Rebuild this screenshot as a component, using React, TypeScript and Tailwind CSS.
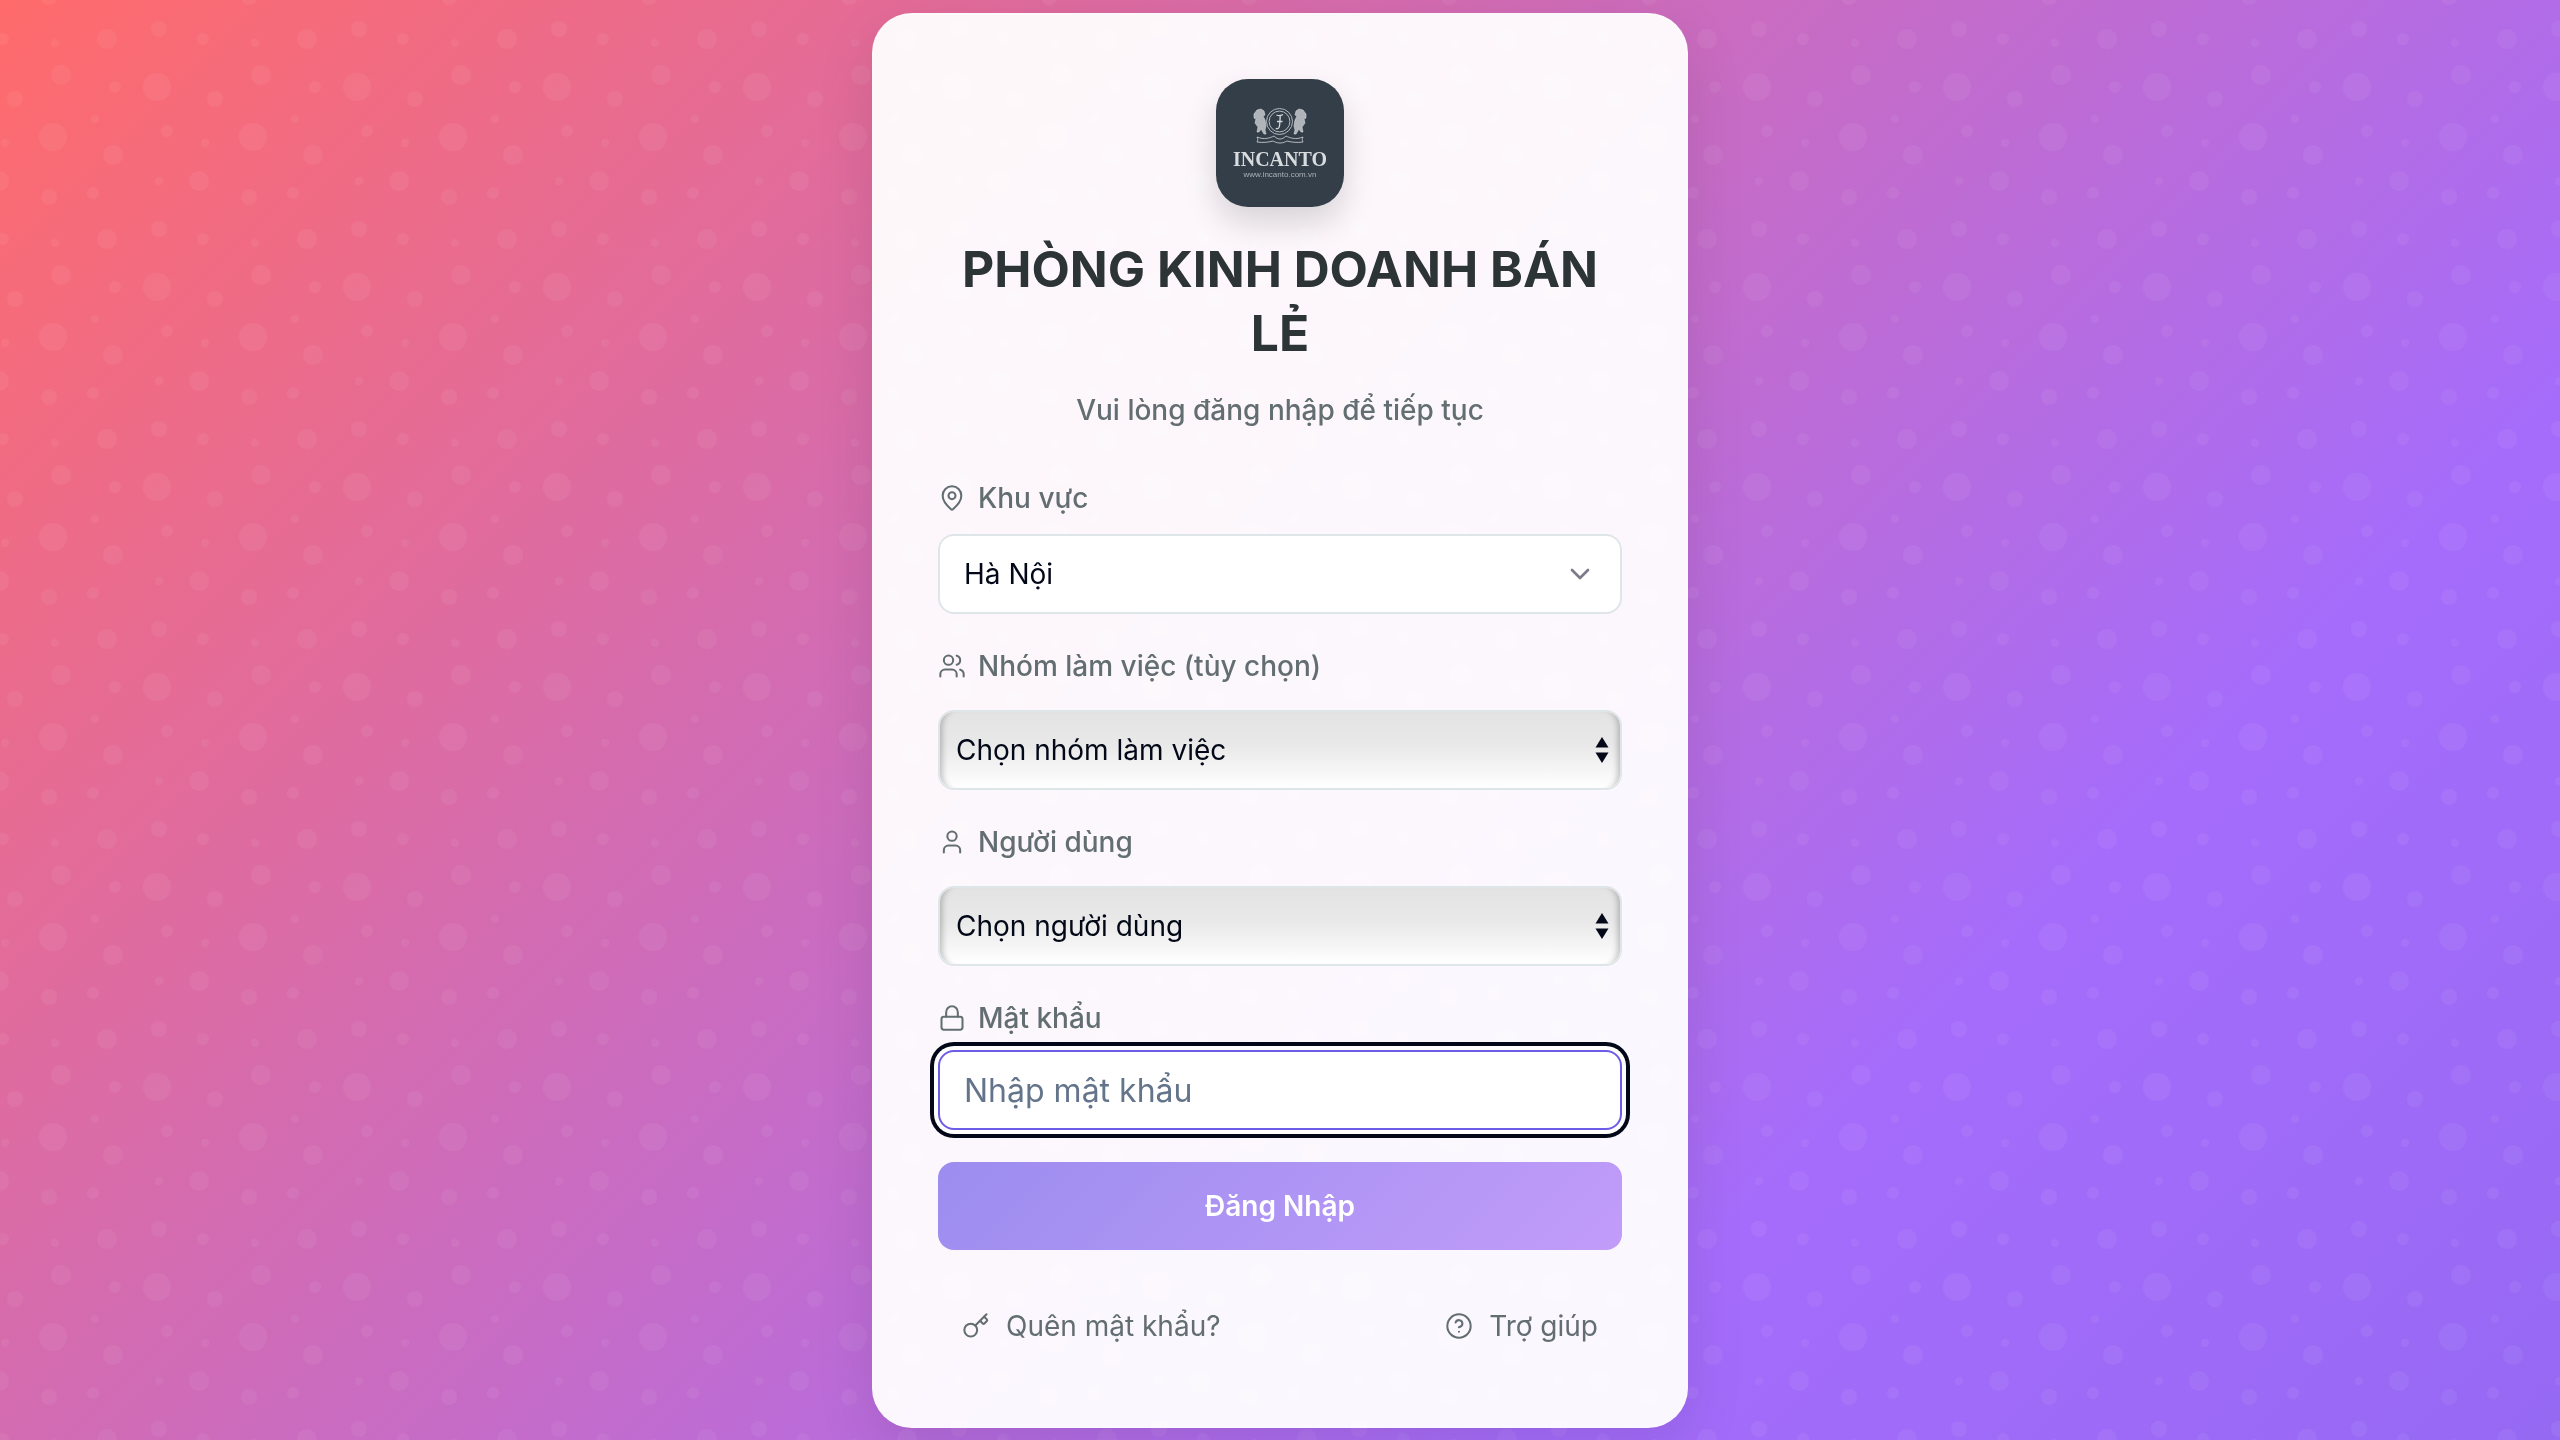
import { ChevronDown, CircleHelp, Key, Lock, MapPin, User, Users } from "lucide-react";
import type { ReactNode } from "react";

const dots: [number, number, number][] = [
  [61, 75, 10], [115, 87, 6], [157, 87, 14], [15, 99, 8], [95, 119, 4],
  [53, 137, 14], [167, 131, 6], [5, 143, 4], [113, 155, 10], [159, 181, 4],
  [199, 181, 10], [-1, 181, 10], [49, 197, 8], [49, -3, 8], [93, 193, 6], [93, -7, 6],
  [159, 29, 8], [107, 39, 10], [3, 39, 6], [203, 39, 6], [55, 43, 4],
];

function BackgroundDots() {
  return (
    <svg className="absolute inset-0 h-full w-full" aria-hidden="true">
      <defs>
        <pattern id="dots" width="200" height="200" patternUnits="userSpaceOnUse">
          {dots.map(([cx, cy, r]) => (
            <circle key={`${cx}-${cy}`} cx={cx} cy={cy} r={r} fill="#ffffff" fillOpacity="0.05" />
          ))}
        </pattern>
      </defs>
      <rect width="100%" height="100%" fill="url(#dots)" />
    </svg>
  );
}

function Crest() {
  return (
    <svg width="54" height="38" viewBox="0 0 54 38" fill="none" stroke="#d3d7da" strokeWidth="0.9" aria-hidden="true">
      <circle cx="26.5" cy="13.5" r="13" strokeWidth="0.8" />
      <circle cx="26.5" cy="13.5" r="10.4" strokeWidth="0.8" />
      <path d="M23.5 7c2 1 4 1 6.5-.5M27.5 7c-1 4 0 9-1.5 12.5-.8 1.5-2.5 1.6-3 .4M24 13.5h5.5" strokeWidth="1.3" />
      <path d="M1 6l3-4 4-1 3 2 1 4-2 1 2 4 1 6-1 4 1 4h-2l-3-5-2 3H4l1-5-3-4 1-4-2-1z" fill="#aeb4b9" strokeWidth="0.6" />
      <path d="M53 6l-3-4-4-1-3 2-1 4 2 1-2 4-1 6 1 4-1 4h2l3-5 2 3h2l-1-5 3-4-1-4 2-1z" fill="#aeb4b9" strokeWidth="0.6" />
      <path d="M4 29c7 3 13 1 17-1 2 2 4 3 6 3s4-1 6-3c4 2 10 4 17 1-1 2-1 3 0 5-7 1-12 0-16-1-2 1-4 2-7 2s-5-1-7-2c-4 1-9 2-16 1 1-2 1-3 0-5z" strokeWidth="0.8" />
    </svg>
  );
}

function FieldLabel({ icon, children, className }: { icon: ReactNode; children: ReactNode; className: string }) {
  return (
    <label className={`flex h-10 items-center gap-2 text-[28px] font-medium leading-10 text-[#636e72] ${className}`}>
      <span className="flex w-8">{icon}</span>
      {children}
    </label>
  );
}

function NativeSelect({ placeholder }: { placeholder: string }) {
  return (
    <div className="relative h-20 overflow-hidden rounded-2xl border-2 border-[#dfe6e9] bg-[linear-gradient(180deg,#e3e3e3_0%,#e9e9e9_45%,#ffffff_100%)] shadow-[inset_8px_0_6px_-6px_rgba(0,0,0,0.25),inset_-8px_0_6px_-6px_rgba(0,0,0,0.25)]">
      <select className="h-full w-full appearance-none bg-transparent pl-4 pr-12 text-[28px] text-[#020817] outline-none">
        <option>{placeholder}</option>
      </select>
      <svg className="absolute right-[11px] top-[25px]" width="14" height="26" viewBox="0 0 14 26" fill="#020817" aria-hidden="true">
        <path d="M7 0l6.5 10.5H.5z" />
        <path d="M7 26L.5 15.5h13z" />
      </svg>
    </div>
  );
}

export default function App() {
  return (
    <div className="relative flex h-[1440px] w-full items-center justify-center overflow-hidden bg-[linear-gradient(135deg,#ff6b6b_0%,#a56cfb_74%,#9669f3_100%)] font-['Inter',sans-serif]">
      <BackgroundDots />
      <div className="relative h-[1415px] w-[816px] rounded-[40px] border-2 border-white/20 bg-white/95 p-16 shadow-[0_20px_60px_rgba(0,0,0,0.1)] backdrop-blur-[2px]">
        <div className="flex flex-col items-center">
          <div className="flex h-32 w-32 flex-col items-center justify-center rounded-[32px] bg-[#343e48] pt-[2px] shadow-[0_16px_32px_rgba(0,0,0,0.15)]">
            <Crest />
            <span className="mt-[1px] font-['Liberation_Serif',serif] text-[20px] font-bold leading-6 text-[#d8dcdf]">
              INCANTO
            </span>
            <span className="font-['Liberation_Sans',sans-serif] text-[8px] leading-2 text-[#aab1b6]">
              www.incanto.com.vn
            </span>
          </div>
          <h1 className="mt-[30px] text-center text-[49.8px] font-bold leading-16 text-[#2d3436]">
            PHÒNG KINH DOANH BÁN LẺ
          </h1>
          <p className="mt-[21px] text-[28px] font-medium leading-12 text-[#636e72]">Vui lòng đăng nhập để tiếp tục</p>
        </div>

        <form className="mt-11">
          <FieldLabel icon={<MapPin size={28} strokeWidth={1.75} />} className="mb-4">
            Khu vực
          </FieldLabel>
          <div className="flex h-20 items-center justify-between rounded-2xl border-2 border-[#dfe6e9] bg-white pl-6 pr-6 text-[28px] text-[#020817]">
            Hà Nội
            <ChevronDown size={32} strokeWidth={2} className="text-[#7b7b8b]" />
          </div>

          <FieldLabel icon={<Users size={28} strokeWidth={1.75} />} className="mb-6 mt-8">
            Nhóm làm việc (tùy chọn)
          </FieldLabel>
          <NativeSelect placeholder="Chọn nhóm làm việc" />

          <FieldLabel icon={<User size={28} strokeWidth={1.75} />} className="mb-6 mt-8">
            Người dùng
          </FieldLabel>
          <NativeSelect placeholder="Chọn người dùng" />

          <FieldLabel icon={<Lock size={28} strokeWidth={1.75} />} className="mb-3 mt-8">
            Mật khẩu
          </FieldLabel>
          <input
            type="password"
            placeholder="Nhập mật khẩu"
            className="block h-20 w-full rounded-2xl border-2 border-[#6c5ce7] bg-white px-6 pt-[2px] text-[32px] text-[#020817] shadow-[0_0_0_4px_#ffffff,0_0_0_8px_#020817] outline-none placeholder:text-[#64748b]"
          />

          <button
            type="button"
            className="mt-8 block h-[88px] w-full rounded-2xl bg-[linear-gradient(135deg,#9b8def,#c29cf9)] text-[28px] font-semibold text-white"
          >
            Đăng Nhập
          </button>

          <div className="mt-11 flex items-center justify-between px-6 text-[28px] text-[#636e72]">
            <a className="flex h-16 items-center gap-4">
              <Key size={28} strokeWidth={1.75} />
              Quên mật khẩu?
            </a>
            <a className="flex h-16 items-center gap-4">
              <CircleHelp size={28} strokeWidth={1.75} />
              Trợ giúp
            </a>
          </div>
        </form>
      </div>
    </div>
  );
}
